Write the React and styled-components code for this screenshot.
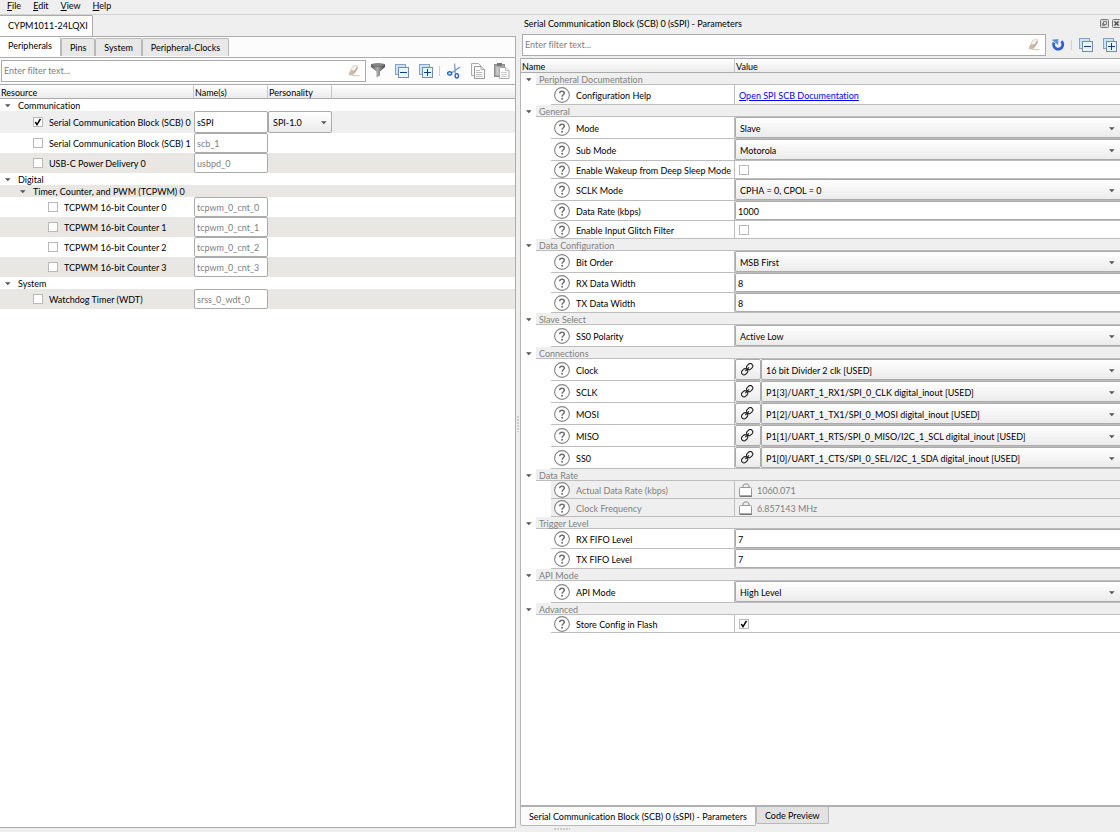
import { useState } from "react";
import styled, { createGlobalStyle, css } from "styled-components";

const resources = [
  { kind: "group", level: 0, label: "Communication" },
  { kind: "item", level: 1, label: "Serial Communication Block (SCB) 0", name: "sSPI", personality: "SPI-1.0", checked: true, shade: "#efefef" },
  { kind: "item", level: 1, label: "Serial Communication Block (SCB) 1", name: "scb_1" },
  { kind: "item", level: 1, label: "USB-C Power Delivery 0", name: "usbpd_0", shade: "#e8e7e3" },
  { kind: "group", level: 0, label: "Digital" },
  { kind: "group", level: 1, label: "Timer, Counter, and PWM (TCPWM) 0", shade: "#e8e7e3" },
  { kind: "item", level: 2, label: "TCPWM 16-bit Counter 0", name: "tcpwm_0_cnt_0" },
  { kind: "item", level: 2, label: "TCPWM 16-bit Counter 1", name: "tcpwm_0_cnt_1", shade: "#e8e7e3" },
  { kind: "item", level: 2, label: "TCPWM 16-bit Counter 2", name: "tcpwm_0_cnt_2" },
  { kind: "item", level: 2, label: "TCPWM 16-bit Counter 3", name: "tcpwm_0_cnt_3", shade: "#e8e7e3" },
  { kind: "group", level: 0, label: "System" },
  { kind: "item", level: 1, label: "Watchdog Timer (WDT)", name: "srss_0_wdt_0", shade: "#e8e7e3" },
];

const sections = [
  { title: "Peripheral Documentation", params: [
    { label: "Configuration Help", type: "link", value: "Open SPI SCB Documentation" },
  ] },
  { title: "General", params: [
    { label: "Mode", type: "select", value: "Slave" },
    { label: "Sub Mode", type: "select", value: "Motorola" },
    { label: "Enable Wakeup from Deep Sleep Mode", type: "check", value: false },
    { label: "SCLK Mode", type: "select", value: "CPHA = 0, CPOL = 0" },
    { label: "Data Rate (kbps)", type: "text", value: "1000" },
    { label: "Enable Input Glitch Filter", type: "check", value: false },
  ] },
  { title: "Data Configuration", params: [
    { label: "Bit Order", type: "select", value: "MSB First" },
    { label: "RX Data Width", type: "text", value: "8" },
    { label: "TX Data Width", type: "text", value: "8" },
  ] },
  { title: "Slave Select", params: [
    { label: "SS0 Polarity", type: "select", value: "Active Low" },
  ] },
  { title: "Connections", params: [
    { label: "Clock", type: "signal", value: "16 bit Divider 2 clk [USED]" },
    { label: "SCLK", type: "signal", value: "P1[3]/UART_1_RX1/SPI_0_CLK digital_inout [USED]" },
    { label: "MOSI", type: "signal", value: "P1[2]/UART_1_TX1/SPI_0_MOSI digital_inout [USED]" },
    { label: "MISO", type: "signal", value: "P1[1]/UART_1_RTS/SPI_0_MISO/I2C_1_SCL digital_inout [USED]" },
    { label: "SS0", type: "signal", value: "P1[0]/UART_1_CTS/SPI_0_SEL/I2C_1_SDA digital_inout [USED]" },
  ] },
  { title: "Data Rate", params: [
    { label: "Actual Data Rate (kbps)", type: "readonly", value: "1060.071" },
    { label: "Clock Frequency", type: "readonly", value: "6.857143 MHz" },
  ] },
  { title: "Trigger Level", params: [
    { label: "RX FIFO Level", type: "text", value: "7" },
    { label: "TX FIFO Level", type: "text", value: "7" },
  ] },
  { title: "API Mode", params: [
    { label: "API Mode", type: "select", value: "High Level" },
  ] },
  { title: "Advanced", params: [
    { label: "Store Config in Flash", type: "check", value: true },
  ] },
];

const rowHeights = { link: 20, select: 22, signal: 22, text: 20, check: 18, readonly: 18 };

const ArrowIcon = () => (
  <svg width="6" height="6" viewBox="0 0 6 6" aria-hidden="true">
    <path d="M0 2.200h5.600L2.800 5.300z" fill="#555" />
  </svg>
);

const EraserIcon = () => (
  <svg width="12" height="12" viewBox="0 0 12 12" aria-hidden="true">
    <path d="M5 .8h4.600L6 7.200H1.800z" fill="#faf6f0" stroke="#d3c5b6" strokeWidth=".8" />
    <path d="M3 5.200h4.200L5.600 8.200 4.800 10.200H.8L1 8.200z" fill="#cdbaa9" />
    <path d="M5.400 8.200 9.400 1.600l.4 2-4.600 6.600z" fill="#b9a390" />
    <path d="M4.500 10.600h7" stroke="#d8cbb9" strokeWidth="1.200" />
  </svg>
);

const FunnelIcon = () => (
  <svg width="16" height="16" viewBox="0 0 16 16" aria-hidden="true">
    <defs>
      <linearGradient id="funnel" x1="0" x2="1">
        <stop offset="0" stopColor="#555" />
        <stop offset=".45" stopColor="#aaa" />
        <stop offset="1" stopColor="#444" />
      </linearGradient>
    </defs>
    <path d="M1 1.500h14v2.500L10 8.500v4L6.500 14.500v-6L1 4z" fill="url(#funnel)" />
    <ellipse cx="8" cy="2" rx="7" ry="1.400" fill="#8b8b8b" stroke="#555" strokeWidth=".6" />
  </svg>
);

const TreeIcon = ({ plus }) => (
  <svg width="14" height="14" viewBox="0 0 14 14" aria-hidden="true">
    <rect x=".5" y=".5" width="10" height="10" fill="#c9e6f5" stroke="#8d9fc0" />
    <rect x="3.5" y="3.5" width="10" height="10" fill="#e6f6fd" stroke="#7588ad" />
    <path d="M5 8.500h7" stroke="#0d3f7d" />
    {plus && <path d="M8.500 5v7" stroke="#0d3f7d" />}
  </svg>
);

const CutIcon = () => (
  <svg width="14" height="16" viewBox="0 0 14 16" fill="none" aria-hidden="true">
    <path d="M7.500 0.500 8.300 10.500" stroke="#8ba9cf" strokeWidth="1.500" />
    <path d="M13 4 4.500 10" stroke="#6f9bd8" strokeWidth="1.500" />
    <ellipse cx="2.600" cy="10.400" rx="2" ry="1.600" stroke="#2c62c8" strokeWidth="1.400" />
    <ellipse cx="9.800" cy="12.800" rx="1.700" ry="2.200" stroke="#2c62c8" strokeWidth="1.400" />
  </svg>
);

const CopyIcon = () => (
  <svg width="14" height="16" viewBox="0 0 14 16" aria-hidden="true">
    <path d="M.5.5h7L10 3v9.500H.5z" fill="#fafafa" stroke="#aaa" />
    <path d="M3.500 3.500H10l3.500 3v9h-10z" fill="#fff" stroke="#999" />
    <path d="M10 3.500v3h3.500" fill="#eee" stroke="#aaa" />
    <path d="M5 7.500h4M5 9.500h6.500M5 11.500h6.500M5 13.500h6.500" stroke="#bbb" />
  </svg>
);

const PasteIcon = () => (
  <svg width="16" height="16" viewBox="0 0 16 16" aria-hidden="true">
    <rect x=".5" y="1.500" width="10" height="12" fill="#a9a9a9" stroke="#8d8d8d" />
    <rect x="3" y="0" width="5" height="3" fill="#777" />
    <path d="M2 4h7v8H2z" fill="#c4c4c4" />
    <path d="M5.500 4.500h6l3.500 3v8H5.500z" fill="#fff" stroke="#aaa" />
    <path d="M11.500 4.500v3H15" fill="#eee" stroke="#bbb" />
    <path d="M7 9.500h6M7 11.500h6M7 13.500h6" stroke="#ccc" />
  </svg>
);

const ResetIcon = () => (
  <svg width="14" height="14" viewBox="0 0 14 14" fill="none" aria-hidden="true">
    <path d="M10.400 3.200A4.600 4.600 0 1 1 3 4.600" stroke="#2f5fcf" strokeWidth="2.800" />
    <path d="M.8 1.800 7.400 1 7 7z" fill="#5b8be8" />
  </svg>
);

const HelpIcon = () => (
  <svg width="16" height="16" viewBox="0 0 16 16" fill="none" aria-hidden="true">
    <circle cx="8" cy="8" r="7.400" stroke="#858585" strokeWidth="1.100" fill="#fff" />
    <path d="M5.700 6.300C5.700 3.400 10.400 3.500 10.300 6.100 10.300 7.800 8.100 7.700 8.100 9.700" stroke="#6b6b6b" strokeWidth="1.500" />
    <circle cx="8.100" cy="11.800" r=".95" fill="#6b6b6b" />
  </svg>
);

const LinkIcon = () => (
  <svg width="14" height="14" viewBox="0 0 14 14" fill="none" stroke="#222" strokeWidth="1.100" aria-hidden="true">
    <rect x="5.400" y="1.100" width="6.600" height="5" rx="2.500" transform="rotate(-45 8.700 3.600)" />
    <rect x=".3" y="6.300" width="6.600" height="5" rx="2.500" transform="rotate(-45 3.600 8.800)" />
    <path d="M4.300 8.100 8 4.300" />
  </svg>
);

const LockIcon = () => (
  <svg width="14" height="14" viewBox="0 0 14 14" fill="none" aria-hidden="true">
    <path d="M4 4.500V3C4 .2 10 .2 10 3v1.500" stroke="#8a8a8a" />
    <rect x=".5" y="4.500" width="12" height="8.500" rx="1" fill="#fff" stroke="#999" />
    <path d="M.5 13.200h12.500" stroke="#555" />
  </svg>
);

const FloatIcon = () => (
  <svg width="9" height="9" viewBox="0 0 9 9" fill="none" aria-hidden="true">
    <rect x=".5" y=".5" width="8" height="8" rx="1" fill="#ddd" stroke="#777" />
    <path d="M3.500 2.500h3v3h-3zM2.500 4v2.500H5" stroke="#666" strokeWidth=".8" />
  </svg>
);

const CloseIcon = () => (
  <svg width="9" height="9" viewBox="0 0 9 9" fill="none" aria-hidden="true">
    <rect x=".5" y=".5" width="8" height="8" rx="1" fill="#ddd" stroke="#777" />
    <path d="m2.500 2.500 4 4m0-4-4 4" stroke="#444" strokeWidth="1.300" />
  </svg>
);

const Select = ({ id, value, label }) => (
  <SelectBox>
    <select id={id} aria-label={label} defaultValue={value}>
      <option>{value}</option>
    </select>
    <ArrowIcon />
  </SelectBox>
);

const ResourceRow = ({ row }) => {
  const [checked, setChecked] = useState(!!row.checked);
  if (row.kind === "group") {
    return (
      <ResourceTr $shade={row.shade}>
        <td colSpan={4}>
          <TreeGroup $level={row.level}><ArrowIcon /><span>{row.label}</span></TreeGroup>
        </td>
      </ResourceTr>
    );
  }
  return (
    <ResourceTr $shade={row.shade}>
      <td>
        <TreeItem $level={row.level} $tall={!!row.personality}>
          <CheckBox type="checkbox" checked={checked} onChange={(e) => setChecked(e.target.checked)} />
          <span>{row.label}</span>
        </TreeItem>
      </td>
      <td>
        <NameInput $tall={!!row.personality} defaultValue={row.name} disabled={!row.checked} aria-label={row.label + " name"} />
      </td>
      <td>
        {row.personality && (
          <Personality><Select value={row.personality} label="Personality" /></Personality>
        )}
      </td>
      <td />
    </ResourceTr>
  );
};

const ParamValue = ({ id, param }) => {
  switch (param.type) {
    case "link":
      return <DocLink id={id} href="#docs">{param.value}</DocLink>;
    case "select":
      return <Select id={id} value={param.value} />;
    case "signal":
      return (
        <>
          <LinkButton aria-label={"Go to " + param.label}><LinkIcon /></LinkButton>
          <Select id={id} value={param.value} />
        </>
      );
    case "check":
      return <CheckCell><CheckBox id={id} type="checkbox" defaultChecked={param.value} /></CheckCell>;
    case "text":
      return <ValueInput id={id} defaultValue={param.value} />;
    default:
      return <ReadOnly id={id}><LockIcon /><span>{param.value}</span></ReadOnly>;
  }
};

const App = () => {
  const menus = ["File", "Edit", "View", "Help"];
  const tabs = ["Peripherals", "Pins", "System", "Peripheral-Clocks"];
  const [tab, setTab] = useState("Peripherals");

  return (
    <>
      <GlobalStyle />
      <Window>
        <MenuBar>
          {menus.map((m) => (
            <button key={m}><u>{m[0]}</u>{m.slice(1)}</button>
          ))}
        </MenuBar>
        <Workspace>
          <LeftPane>
            <DeviceTabs><button>CYPM1011-24LQXI</button></DeviceTabs>
            <LeftBody>
              <Tabs>
                {tabs.map((t) => (
                  <Tab key={t} $active={t === tab} onClick={() => setTab(t)}>{t}</Tab>
                ))}
              </Tabs>
              <Toolbar>
                <FilterBox>
                  <input placeholder="Enter filter text..." aria-label="Filter resources" />
                  <EraserIcon />
                </FilterBox>
                <ToolButton aria-label="Filter"><FunnelIcon /></ToolButton>
                <ToolButton aria-label="Collapse all"><TreeIcon /></ToolButton>
                <ToolButton aria-label="Expand all"><TreeIcon plus /></ToolButton>
                <Divider />
                <ToolButton aria-label="Cut"><CutIcon /></ToolButton>
                <ToolButton aria-label="Copy"><CopyIcon /></ToolButton>
                <ToolButton aria-label="Paste"><PasteIcon /></ToolButton>
              </Toolbar>
              <Grid>
                <colgroup>
                  <Col $width={194} />
                  <Col $width={74} />
                  <Col $width={64} />
                  <col />
                </colgroup>
                <thead>
                  <HeadRow><th>Resource</th><th>Name(s)</th><th>Personality</th><th /></HeadRow>
                </thead>
                <tbody>
                  {resources.map((row) => <ResourceRow key={row.label} row={row} />)}
                </tbody>
              </Grid>
            </LeftBody>
          </LeftPane>
          <RightPane>
            <Splitter />
            <RightBody>
              <TitleBar>
                <h1>Serial Communication Block (SCB) 0 (sSPI) - Parameters</h1>
                <button aria-label="Float"><FloatIcon /></button>
                <button aria-label="Close"><CloseIcon /></button>
              </TitleBar>
              <Toolbar $right>
                <FilterBox>
                  <input placeholder="Enter filter text..." aria-label="Filter parameters" />
                  <EraserIcon />
                </FilterBox>
                <ToolButton aria-label="Reset"><ResetIcon /></ToolButton>
                <Divider />
                <ToolButton aria-label="Collapse all"><TreeIcon /></ToolButton>
                <ToolButton aria-label="Expand all"><TreeIcon plus /></ToolButton>
              </Toolbar>
              <ParamArea>
                <Grid>
                  <colgroup>
                    <Col $width={214} />
                    <col />
                  </colgroup>
                  <thead>
                    <HeadRow><th>Name</th><th>Value</th></HeadRow>
                  </thead>
                  {sections.map((section, i) => (
                    <tbody key={section.title}>
                      <tr>
                        <td>
                          <SectionName><ArrowIcon /><span>{section.title}</span></SectionName>
                        </td>
                        <td><ValueCell $height={12} $gray /></td>
                      </tr>
                      {section.params.map((param, j) => {
                        const id = "param-" + i + "-" + j;
                        const gray = param.type === "readonly";
                        return (
                          <tr key={id}>
                            <td>
                              <ParamName $height={rowHeights[param.type]} $gray={gray}>
                                <HelpIcon />
                                <label htmlFor={id}>{param.label}</label>
                              </ParamName>
                            </td>
                            <td>
                              <ValueCell $height={rowHeights[param.type]} $gray={gray}>
                                <ParamValue id={id} param={param} />
                              </ValueCell>
                            </td>
                          </tr>
                        );
                      })}
                    </tbody>
                  ))}
                </Grid>
              </ParamArea>
              <BottomTabs>
                <BottomTab $active>Serial Communication Block (SCB) 0 (sSPI) - Parameters</BottomTab>
                <BottomTab>Code Preview</BottomTab>
              </BottomTabs>
              <BottomGrip />
            </RightBody>
          </RightPane>
        </Workspace>
      </Window>
    </>
  );
};

const GlobalStyle = createGlobalStyle`
  * {
    box-sizing: border-box;
  }
  body {
    margin: 0;
    background: #efefef;
    color: #000;
    font: 9px/12px Lato, "Liberation Sans", sans-serif;
    font-variant-ligatures: none;
  }
  button, input, select {
    margin: 0;
    padding: 0;
    border: none;
    border-radius: 0;
    background: none;
    color: inherit;
    font: inherit;
    font-variant-ligatures: none;
  }
  svg {
    display: block;
    flex: none;
  }
`;

const Window = styled.div`
  display: flex;
  flex-direction: column;
  min-height: 100vh;
`;

const MenuBar = styled.nav`
  display: flex;
  gap: 12px;
  height: 15px;
  padding: 0 7px 2px;
  border-bottom: 1px solid #d4d4d4;
`;

const Workspace = styled.div`
  display: grid;
  flex: 1;
  grid-template-columns: minmax(0, 129fr) minmax(0, 151fr);
`;

const LeftPane = styled.section`
  display: flex;
  flex-direction: column;
  padding-bottom: 4px;
`;

const DeviceTabs = styled.div`
  display: flex;
  height: 21px;
  button {
    padding: 0 4px 0 8px;
    border: 1px solid #ababab;
    border-width: 1px 1px 0 0;
    border-radius: 0 2px 0 0;
    background: #fdfdfd;
  }
`;

const LeftBody = styled.div`
  display: flex;
  flex: 1;
  flex-direction: column;
  border: 1px solid #ababab;
  border-left: none;
  background: #fff;
`;

const Tabs = styled.div`
  display: flex;
  align-items: flex-end;
  height: 21px;
  padding-bottom: 1px;
  border-bottom: 1px solid #ababab;
  background: #fcfcfc;
`;

const Tab = styled.button`
  height: 18px;
  padding: 0 8px;
  border: 1px solid #b8b8b8;
  border-bottom: none;
  border-radius: 2px 2px 0 0;
  background: #e8e8e8;
  ${(props) => props.$active && css`
    height: 19px;
    padding-bottom: 2px;
    border-width: 0 1px 0 0;
    background: #fff;
  `}
`;

const Toolbar = styled.div`
  display: flex;
  align-items: center;
  height: 26px;
  padding: 0 1px;
  background: ${(props) => (props.$right ? "#efefef" : "#fcfcfc")};
  ${(props) => props.$right && css`
    height: 25px;
    padding: 0 0 2px 2px;
    margin-right: -2px;
  `}
`;

const FilterBox = styled.div`
  display: flex;
  flex: 1;
  align-items: center;
  height: 22px;
  padding: 0 5px 0 2px;
  border: 1px solid #ababab;
  background: #fff;
  input {
    flex: 1;
    min-width: 0;
    outline: none;
  }
  input::placeholder {
    color: #808080;
    opacity: 1;
  }
`;

const ToolButton = styled.button`
  display: grid;
  place-items: center;
  width: 24px;
  height: 22px;
`;

const Divider = styled.span`
  width: 1px;
  height: 10px;
  margin: 0 2px 0 1px;
  background: #d0d0d0;
`;

const Grid = styled.table`
  width: 100%;
  table-layout: fixed;
  border-collapse: separate;
  border-spacing: 0;
  td {
    padding: 0;
    vertical-align: top;
  }
`;

const Col = styled.col`
  width: ${(props) => props.$width}px;
`;

const HeadRow = styled.tr`
  th {
    height: 15px;
    padding: 2px 0 0 1px;
    border: 1px solid #ababab;
    border-left: none;
    border-right-color: #c8c8c8;
    background: linear-gradient(#fff, #ebebeb);
    font-weight: 400;
    line-height: 11px;
    text-align: left;
  }
  th:last-child {
    border-right: none;
  }
`;

const ResourceTr = styled.tr`
  background: ${(props) => props.$shade || "#fff"};
`;

const TreeGroup = styled.div`
  display: flex;
  align-items: center;
  gap: 7px;
  height: 12px;
  padding-left: ${(props) => props.$level * 15 + 5}px;
  span {
    padding-top: 2px;
  }
`;

const TreeItem = styled.label`
  display: flex;
  align-items: center;
  gap: 6px;
  height: ${(props) => (props.$tall ? 22 : 20)}px;
  padding-left: ${(props) => props.$level * 15 + 18}px;
  white-space: nowrap;
  span {
    padding-top: 2px;
  }
`;

const check = `url("data:image/svg+xml,%3Csvg xmlns='http://www.w3.org/2000/svg' viewBox='0 0 8 8'%3E%3Cpath d='M1.300 4 3 6.600 6.500.8' fill='none' stroke='%23000' stroke-width='1.500'/%3E%3C/svg%3E")`;

const CheckBox = styled.input`
  appearance: none;
  flex: none;
  width: 10px;
  height: 10px;
  border: 1px solid #b9b9b9;
  background: #fff;
  &:checked {
    background: #fff ${check} center / 8px 8px no-repeat;
  }
`;

const NameInput = styled.input`
  display: block;
  width: 100%;
  height: ${(props) => (props.$tall ? 22 : 20)}px;
  padding: 0 2px;
  border: 1px solid #ababab;
  border-radius: 2px;
  background: #fff;
  &:disabled {
    color: #808080;
  }
`;

const SelectBox = styled.div`
  display: grid;
  flex: 1;
  grid-template-columns: minmax(0, 1fr);
  align-items: center;
  select {
    grid-area: 1 / 1;
    width: 100%;
    height: 100%;
    padding: 2px 0 0 4px;
    appearance: none;
    border: 1px solid #ababab;
    border-right: none;
    border-radius: 2px 0 0 2px;
    background: linear-gradient(#fff, #ebebeb);
  }
  svg {
    grid-area: 1 / 1;
    justify-self: end;
    margin-right: 5px;
    pointer-events: none;
  }
`;

const Personality = styled.div`
  display: flex;
  height: 22px;
  select {
    border-right: 1px solid #ababab;
    border-radius: 2px;
  }
`;

const RightPane = styled.section`
  display: flex;
  overflow: hidden;
`;

const Splitter = styled.div`
  align-self: center;
  width: 4px;
  height: 16px;
  background: radial-gradient(circle at 2px 1px, #ccc 1px, transparent 1px) 0 0 / 4px 3px;
`;

const RightBody = styled.div`
  display: flex;
  flex: 1;
  flex-direction: column;
  min-width: 0;
`;

const TitleBar = styled.header`
  display: flex;
  align-items: center;
  gap: 3px;
  height: 18px;
  padding: 0 0 2px 4px;
  margin-right: -1px;
  h1 {
    flex: 1;
    margin: 0;
    padding-top: 2px;
    font-size: 9px;
    font-weight: 400;
  }
`;

const ParamArea = styled.div`
  flex: 1;
  border-left: 1px solid #b5b5b5;
  border-bottom: 2px solid #b0b0b0;
  background: #fff;
`;

const SectionName = styled.div`
  display: flex;
  align-items: center;
  gap: 4px;
  height: 12px;
  padding-left: 5px;
  color: #808080;
  span {
    flex: 1;
    height: 12px;
    padding: 1px 0 0 3px;
    border-bottom: 1px solid #bdbdbd;
    background: #efefef;
  }
`;

const ParamName = styled.div`
  display: flex;
  align-items: center;
  gap: 6px;
  height: ${(props) => props.$height}px;
  margin-left: 30px;
  padding-left: 3px;
  border-bottom: 1px solid #bdbdbd;
  background: ${(props) => (props.$gray ? "#efefef" : "#fff")};
  color: ${(props) => (props.$gray ? "#808080" : "#000")};
  white-space: nowrap;
  label {
    padding-top: 2px;
  }
`;

const ValueCell = styled.div`
  display: flex;
  height: ${(props) => props.$height}px;
  margin-left: -1px;
  border: 1px solid #bdbdbd;
  border-width: 0 0 1px 1px;
  background: ${(props) => (props.$gray ? "#efefef" : "#fff")};
`;

const DocLink = styled.a`
  align-self: center;
  padding: 2px 0 0 4px;
  color: #0000ff;
`;

const CheckCell = styled.div`
  display: flex;
  align-items: center;
  padding-left: 4px;
`;

const ValueInput = styled.input`
  flex: 1;
  min-width: 0;
  padding: 2px 0 0 2px;
  border: 1px solid #ababab;
  border-right: none;
  border-radius: 2px 0 0 2px;
`;

const LinkButton = styled.button`
  display: grid;
  place-items: center;
  width: 26px;
  border: 1px solid #ababab;
  border-radius: 2px;
  background: linear-gradient(#fff, #ebebeb);
`;

const ReadOnly = styled.output`
  display: flex;
  align-items: center;
  gap: 4px;
  padding-left: 4px;
  color: #808080;
  span {
    padding-top: 2px;
  }
`;

const BottomTabs = styled.div`
  display: flex;
  align-items: flex-start;
  height: 20px;
`;

const BottomTab = styled.button`
  height: 17px;
  padding: 2px 8px 0;
  border: 1px solid #b8b8b8;
  border-top: none;
  border-radius: 0 0 2px 2px;
  background: #e2e2e2;
  ${(props) => props.$active && css`
    height: 19px;
    background: #fbfbfb;
  `}
`;

const BottomGrip = styled.div`
  width: 16px;
  height: 5px;
  margin-left: 34px;
  background: radial-gradient(circle at 1px 1px, #ccc 1px, transparent 1px) 0 1px / 3px 4px repeat-x;
`;

export default App;
